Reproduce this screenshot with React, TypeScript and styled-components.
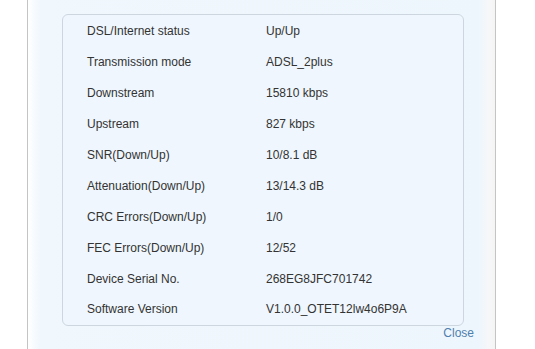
import React from "react";
import styled, { createGlobalStyle } from "styled-components";

const Global = createGlobalStyle`
  html, body { margin: 0; padding: 0; background: #fff; }
  body { font-family: "Liberation Sans", Arial, sans-serif; }
`;

const Page = styled.div`
  width: 535px;
  height: 349px;
  overflow: hidden;
  background: #fff;
  padding-left: 27px;
  box-sizing: border-box;
`;

const Dialog = styled.div`
  width: 469px;
  height: 370px;
  margin-top: -11px;
  box-sizing: border-box;
  border-left: 1px solid #c4c4c4;
  border-right: 1px solid #c4c4c4;
  background: linear-gradient(
    to right,
    #ffffff 0px,
    #f0f7fd 12px,
    #eef6fd calc(100% - 16px),
    #f6f7f8 calc(100% - 6px),
    #f4f4f4 100%
  );
  padding: 25px 0 0 34px;
`;

const InfoBox = styled.div`
  width: 402px;
  box-sizing: border-box;
  border: 1px solid #cdd6df;
  border-radius: 6px;
  background: #eff6fd;
  padding: 1px 0 0 24px;
`;

const Row = styled.div`
  display: flex;
  align-items: center;
  height: 30.9px;
  font-size: 12px;
  color: #333;
`;

const Label = styled.div`
  width: 179px;
  flex: none;
`;

const Value = styled.div`
  flex: 1;
`;

const Footer = styled.div`
  width: 412px;
  display: flex;
  justify-content: flex-end;
`;

const CloseLink = styled.a`
  font-size: 12px;
  color: #4f7fae;
  cursor: pointer;
  text-decoration: none;
`;

const rows: [string, string][] = [
  ["DSL/Internet status", "Up/Up"],
  ["Transmission mode", "ADSL_2plus"],
  ["Downstream", "15810 kbps"],
  ["Upstream", "827 kbps"],
  ["SNR(Down/Up)", "10/8.1 dB"],
  ["Attenuation(Down/Up)", "13/14.3 dB"],
  ["CRC Errors(Down/Up)", "1/0"],
  ["FEC Errors(Down/Up)", "12/52"],
  ["Device Serial No.", "268EG8JFC701742"],
  ["Software Version", "V1.0.0_OTET12lw4o6P9A"],
];

export default function App() {
  return (
    <>
      <Global />
      <Page>
        <Dialog>
          <InfoBox>
            {rows.map(([k, v]) => (
              <Row key={k}>
                <Label>{k}</Label>
                <Value>{v}</Value>
              </Row>
            ))}
          </InfoBox>
          <Footer>
            <CloseLink>Close</CloseLink>
          </Footer>
        </Dialog>
      </Page>
    </>
  );
}
